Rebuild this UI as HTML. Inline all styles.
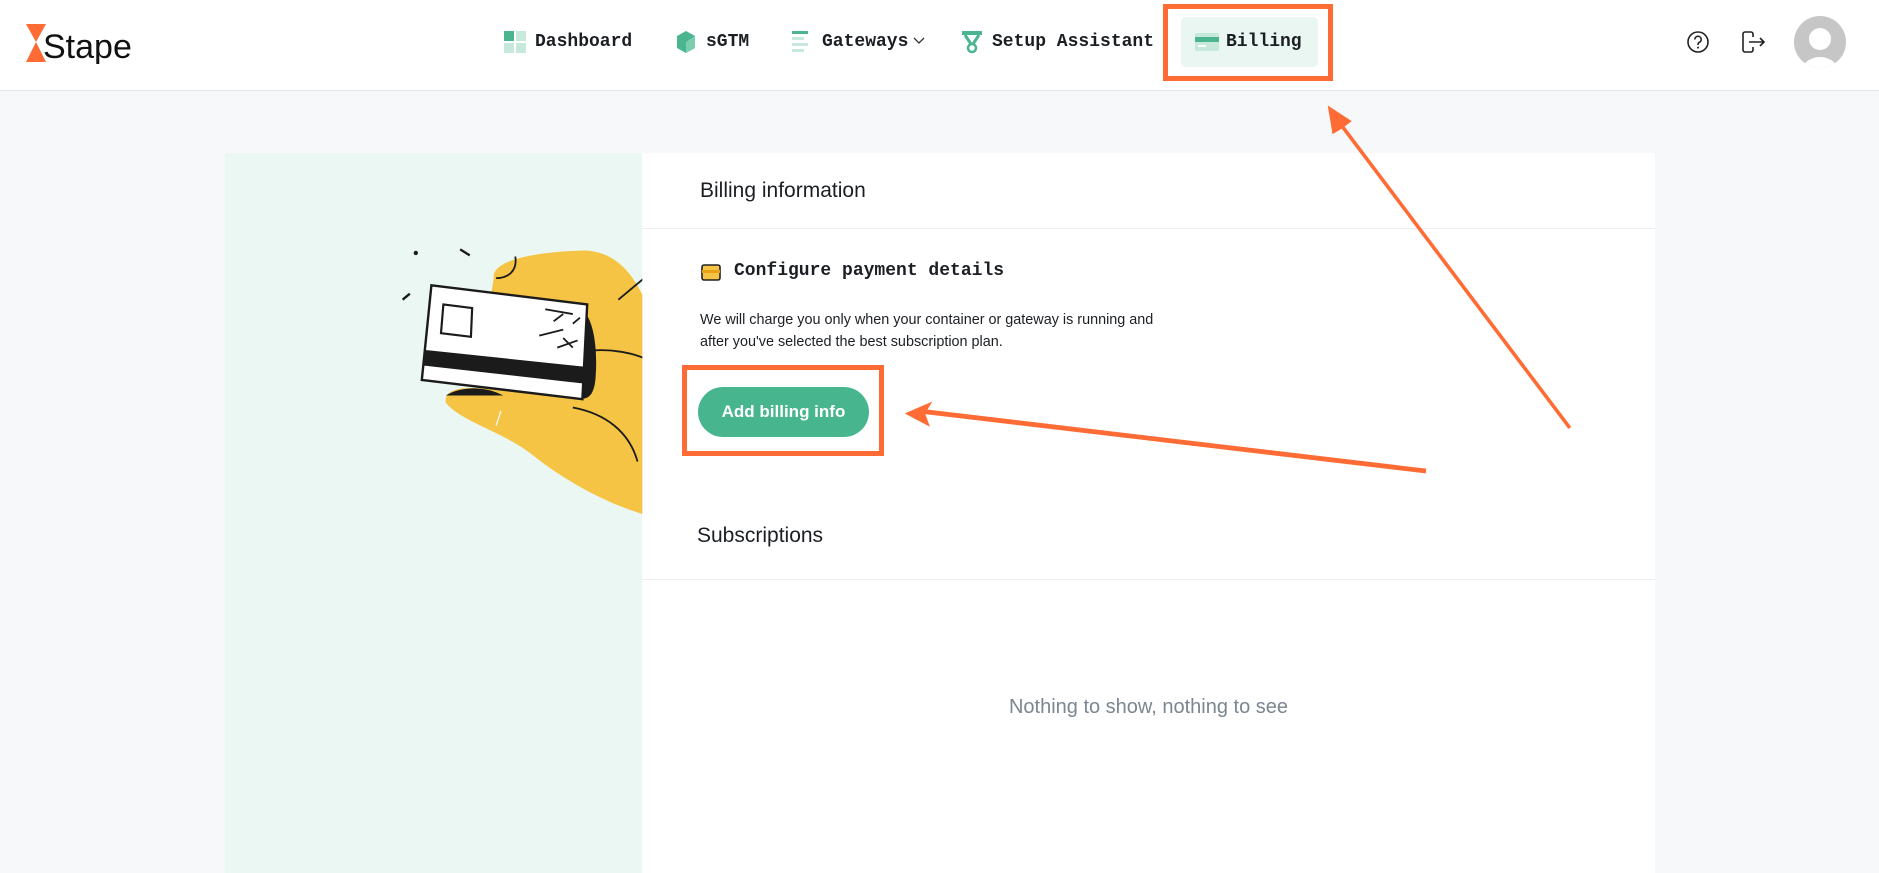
<!DOCTYPE html>
<html><head><meta charset="utf-8"><style>
*{margin:0;padding:0;box-sizing:border-box}
body{width:1879px;height:857px;overflow:hidden;background:#f7f8fa;font-family:"Liberation Sans",sans-serif;position:relative}
.hdr{position:absolute;left:0;top:0;width:1879px;height:91px;background:#fff;border-bottom:1px solid #e3e5e8}
.nav{position:absolute;top:31px;font-family:"Liberation Mono",monospace;font-weight:bold;font-size:18px;color:#1b1f24;line-height:22px}
.panel{position:absolute;left:225px;top:153px;width:1430px;height:720px;background:#fff}
.mint{position:absolute;left:225px;top:153px;width:417px;height:720px;background:#ebf7f2}
.t{position:absolute;color:#1b1f24}
.hr{position:absolute;left:642px;width:1013px;height:1px;background:#eceef0}
</style></head><body>
<div class="hdr"></div>
<svg style="position:absolute;left:26px;top:24px" width="110" height="40" viewBox="0 0 110 40">
<path d="M0 0H20L10 18L20 38H0L10 18Z" fill="#ff6b35"/>
<text x="17" y="34" font-family="Liberation Sans" font-size="34" fill="#111">Stape</text>
</svg>
<svg style="position:absolute;left:504px;top:31px" width="22" height="22"><rect x="0" y="0" width="10" height="10" fill="#4bb58f"/><rect x="12" y="0" width="10" height="10" fill="#c7e9dc"/><rect x="0" y="12" width="10" height="10" fill="#c7e9dc"/><rect x="12" y="12" width="10" height="10" fill="#c7e9dc"/></svg>
<div class="nav" style="left:535px">Dashboard</div>
<svg style="position:absolute;left:676px;top:30px" width="20" height="24"><path d="M10 1L19 6V18L10 23L1 18V6Z" fill="#4bb58f"/><path d="M10 12L19 6V18L10 23Z" fill="#7ccfae"/></svg>
<div class="nav" style="left:706px">sGTM</div>
<svg style="position:absolute;left:792px;top:31px" width="18" height="22"><rect y="0" width="16" height="3" fill="#4bb58f"/><rect y="6" width="12" height="3" fill="#c7e9dc"/><rect y="12" width="16" height="3" fill="#c7e9dc"/><rect y="18" width="12" height="3" fill="#c7e9dc"/></svg>
<div class="nav" style="left:822px">Gateways</div>
<svg style="position:absolute;left:913px;top:37px" width="12" height="8"><path d="M1 1L6 6L11 1" stroke="#333" fill="none" stroke-width="1.3"/></svg>
<svg style="position:absolute;left:961px;top:30px" width="22" height="24"><rect x="1" y="1" width="20" height="4" fill="#4bb58f"/><path d="M4 5L10 14M18 5L12 14" stroke="#4bb58f" stroke-width="3"/><circle cx="11" cy="18" r="4" fill="none" stroke="#4bb58f" stroke-width="2.5"/></svg>
<div class="nav" style="left:992px">Setup Assistant</div>
<div style="position:absolute;left:1181px;top:17px;width:137px;height:50px;background:#e9f6f1;border-radius:5px"></div>
<svg style="position:absolute;left:1195px;top:33px" width="24" height="18"><rect x="0" y="0" width="24" height="18" rx="2" fill="#c7e9dc"/><rect x="0" y="4" width="24" height="5" fill="#4bb58f"/><rect x="3" y="12" width="8" height="2" fill="#fff"/></svg>
<div class="nav" style="left:1226px">Billing</div>
<div style="position:absolute;left:1163px;top:4px;width:170px;height:77px;border:5px solid #ff6b35"></div>
<svg style="position:absolute;left:1686px;top:30px" width="24" height="24"><circle cx="12" cy="12" r="10" fill="none" stroke="#222" stroke-width="1.6"/><path d="M8.8 9.5a3.2 3.2 0 1 1 4.5 2.9c-.9.4-1.3 1-1.3 2v.6" fill="none" stroke="#222" stroke-width="1.6"/><circle cx="12" cy="17.6" r="1" fill="#222"/></svg>
<svg style="position:absolute;left:1741px;top:30px" width="26" height="24"><path d="M10 2H4a2 2 0 0 0-2 2v16a2 2 0 0 0 2 2h6a2 2 0 0 0 2-2v-3M12 7V4a2 2 0 0 0-2-2" fill="none" stroke="#222" stroke-width="1.6"/><path d="M8 12H23M19 8L23 12L19 16" fill="none" stroke="#222" stroke-width="1.6"/></svg>
<svg style="position:absolute;left:1794px;top:16px" width="52" height="52"><defs><clipPath id="c"><circle cx="26" cy="26" r="26"/></clipPath></defs><circle cx="26" cy="26" r="26" fill="#c6c6c6"/><g clip-path="url(#c)" fill="#fff"><circle cx="26" cy="23" r="11"/><ellipse cx="26" cy="55" rx="18" ry="14"/></g></svg>

<div class="panel"></div>
<div class="mint"></div>
<div class="t" style="left:700px;top:179px;font-size:21px">Billing information</div>
<div class="hr" style="top:228px"></div>
<svg style="position:absolute;left:701px;top:264px" width="20" height="17"><rect x="1" y="1" width="18" height="15" rx="2" fill="#f6c445" stroke="#222" stroke-width="1.6"/><rect x="1" y="6" width="18" height="3" fill="#e8a21a"/></svg>
<div class="t" style="left:734px;top:261px;font-family:'Liberation Mono',monospace;font-weight:bold;font-size:18px">Configure payment details</div>
<div class="t" style="left:700px;top:310px;font-size:14.4px;line-height:21.5px;width:520px;white-space:nowrap">We will charge you only when your container or gateway is running and<br>after you've selected the best subscription plan.</div>
<div style="position:absolute;left:698px;top:387px;width:171px;height:50px;border-radius:25px;background:#47b58e;color:#fff;font-weight:bold;font-size:17px;text-align:center;line-height:50px">Add billing info</div>
<div style="position:absolute;left:682px;top:365px;width:202px;height:91px;border:5px solid #ff6b35"></div>
<div class="t" style="left:697px;top:524px;font-size:21px">Subscriptions</div>
<div class="hr" style="top:579px"></div>
<div style="position:absolute;left:642px;width:1013px;top:696px;text-align:center;font-size:20px;color:#7b8691">Nothing to show, nothing to see</div>

<svg style="position:absolute;left:0;top:0" width="1879" height="857" viewBox="0 0 1568 715">
<defs><clipPath id="m"><rect x="188" y="128" width="348" height="600"/></clipPath></defs>
<g clip-path="url(#m)">
<path d="M412 232C410 216 450 210 488 209C515 210 530 230 540 255L540 430C505 420 470 400 445 380C420 360 385 352 372 336C370 322 392 322 418 326L470 318L490 300L410 245Z" fill="#f6c445"/>
<path d="M516 250L540 230" stroke="#1b1b1b" stroke-width="1.5"/>
<path d="M430 214C432 226 424 232 414 232" fill="none" stroke="#1b1b1b" stroke-width="1.5"/>
<path d="M488 293C510 290 530 295 540 300" fill="none" stroke="#1b1b1b" stroke-width="1.5"/>
<path d="M478 340C505 345 525 360 532 385" fill="none" stroke="#1b1b1b" stroke-width="1.5"/>
<path d="M372 330C385 322 405 322 420 330Z" fill="#1b1b1b"/>
<path d="M484 258C495 262 499 290 497 315C496 330 490 334 484 332Z" fill="#1b1b1b"/>
<polygon points="360,238 490,254 486,333 352,317" fill="#fff" stroke="#1b1b1b" stroke-width="2"/>
<polygon points="355,292 488,306 487,320 354,305" fill="#1b1b1b"/>
<polygon points="370,254 394,257 393,281 368,278" fill="none" stroke="#1b1b1b" stroke-width="1.8"/>
<path d="M455 258L478 262M462 268L470 262M450 280L470 275M465 290L482 284M478 270L484 265M470 282L478 290" stroke="#1b1b1b" stroke-width="1.5"/>
<circle cx="347" cy="211" r="1.8" fill="#1b1b1b"/>
<path d="M384 208L392 213M336 250L342 245" stroke="#1b1b1b" stroke-width="2"/>
<path d="M418 343L414 355" stroke="#fff" stroke-width="1"/>
</g>
<path d="M1310 357L1120 107L1128 101L1108 88L1112 112L1120 107Z" fill="#ff6b35"/>
<path d="M1310 357L1116 100" stroke="#ff6b35" stroke-width="3"/>
<path d="M1190 393L768 343" stroke="#ff6b35" stroke-width="4"/>
<path d="M755 345L778 335L772 345L776 356Z" fill="#ff6b35"/>
</svg>
</body></html>
